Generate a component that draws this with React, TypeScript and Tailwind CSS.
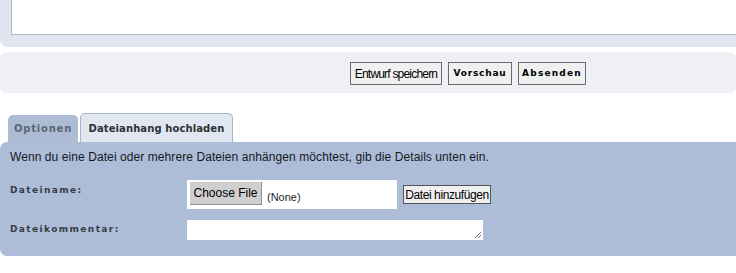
import React from "react";

export default function App() {
  const verd = { fontFamily: '"DejaVu Sans", Verdana, sans-serif' };
  return (
    <div className="w-[736px] h-[273px] bg-white overflow-hidden" style={{ fontFamily: '"Liberation Sans", Arial, sans-serif' }}>
      {/* top panel */}
      <div className="h-[47px] bg-[#dfe6ef] rounded-bl-[7px] pl-[11px]">
        <div className="h-[35px] bg-white border-l border-b border-[#b2b8c0]" />
      </div>
      {/* buttons panel */}
      <div className="mt-[5px] h-[41px] bg-[#eef0f5] rounded-[6px] flex items-start gap-[6px] pl-[350px] pt-[10px]">
        <button className="w-[92px] h-[23px] border border-[#6b6b6b] bg-[#f0f0f0] text-[12px] tracking-[-0.8px] text-black leading-none whitespace-nowrap">
          Entwurf speichern
        </button>
        <button className="w-[64px] h-[23px] border border-[#6b6b6b] bg-[#f0f0f0] text-[9px] font-bold tracking-[0.8px] text-black leading-none" style={verd}>
          Vorschau
        </button>
        <button className="w-[68px] h-[23px] border border-[#6b6b6b] bg-[#f0f0f0] text-[9px] font-bold tracking-[1.2px] text-black leading-none" style={verd}>
          Absenden
        </button>
      </div>
      {/* tabs */}
      <div className="mt-[20px] flex items-end pl-[8px] gap-[2px] h-[29px]">
        <div className="w-[70px] h-[27px] bg-[#adbcd5] rounded-t-[5px] flex items-center justify-center text-[10px] font-bold tracking-[0.8px] text-[#5c6574]" style={verd}>
          Optionen
        </div>
        <div className="w-[153px] h-[29px] bg-[#e1e7f0] border border-b-0 border-[#a9b6c9] rounded-t-[5px] flex items-center justify-center text-[10px] font-bold tracking-[0.1px] text-[#2e3036]" style={verd}>
          Dateianhang hochladen
        </div>
      </div>
      {/* main panel */}
      <div className="h-[114px] bg-[#adbdd7] rounded-l-[7px] pl-[10px] pt-[8px]">
        <div className="text-[12px] tracking-[0.08px] text-[#16191e] leading-[14px]">
          Wenn du eine Datei oder mehrere Dateien anhängen möchtest, gib die Details unten ein.
        </div>
        <div className="mt-[16px] flex items-start">
          <div className="w-[177px] pt-[4px] text-[9px] font-bold tracking-[1.4px] text-[#363c48]" style={verd}>
            Dateiname:
          </div>
          <div className="w-[210px] h-[29px] bg-white flex items-start pl-[3px] pt-[2px]">
            <div className="w-[72px] h-[23px] bg-[#cfcfcf] border-r border-b border-[#8f8f8f] flex items-center justify-center text-[12px] text-black">
              Choose File
            </div>
            <div className="ml-[5px] mt-[10px] text-[11px] text-[#222] leading-none">(None)</div>
          </div>
          <button className="ml-[6px] mt-[5px] w-[88px] h-[19px] border border-[#555] bg-[#f0f0f0] text-[12px] tracking-[-0.4px] text-black leading-none whitespace-nowrap">
            Datei hinzufügen
          </button>
        </div>
        <div className="mt-[11px] flex items-start">
          <div className="w-[177px] pt-[3px] text-[9px] font-bold tracking-[1.4px] text-[#363c48]" style={verd}>
            Dateikommentar:
          </div>
          <div className="relative w-[296px] h-[20px] bg-white">
            <svg className="absolute right-[1px] bottom-[1px]" width="8" height="8" viewBox="0 0 8 8">
              <line x1="1" y1="7" x2="7" y2="1" stroke="#777" strokeWidth="1" />
              <line x1="4" y1="7" x2="7" y2="4" stroke="#777" strokeWidth="1" />
            </svg>
          </div>
        </div>
      </div>
    </div>
  );
}
